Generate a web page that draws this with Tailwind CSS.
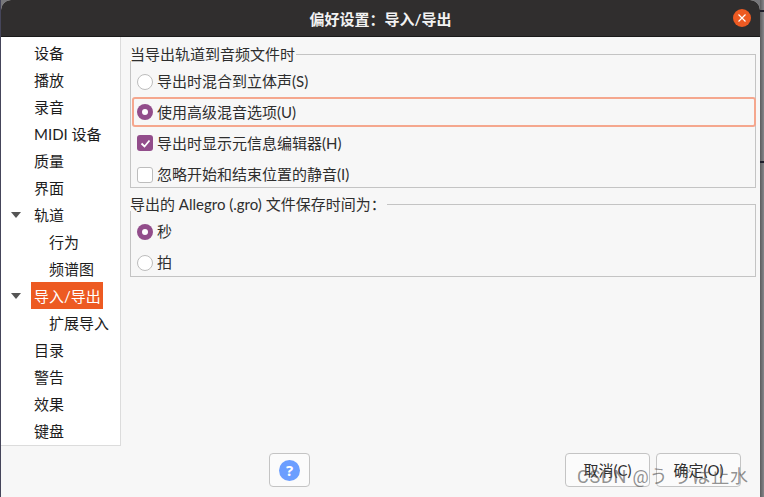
<!DOCTYPE html>
<html><head><meta charset="utf-8"><script src="https://cdn.jsdelivr.net/npm/@tailwindcss/browser@4"></script></head>
<body class="m-0 w-[764px] h-[497px] overflow-hidden bg-[#77777a]">
<div class="relative flex w-[764px] h-[497px] font-['Lato','Noto_Sans_CJK_SC',sans-serif] text-[15px] text-[#2e2e2e] leading-none">
  <div class="w-px shrink-0 bg-[#45455a]"></div>
  <div class="flex flex-col w-[759px] h-full rounded-t-[10px] overflow-hidden bg-[#f7f7f7]">
    <div class="h-[37px] shrink-0 relative flex items-center justify-center bg-[#302e2e] border-b border-[#1a1a1a] text-[#f2f2f2] font-bold pt-[2px]">偏好设置：导入/导出
      <div class="absolute right-[9px] top-[9px] w-[18px] h-[18px] rounded-full bg-[#ed5a22] flex items-center justify-center">
        <svg width="10" height="10" viewBox="0 0 10 10"><path d="M1.5 1.5l7 7M8.5 1.5l-7 7" stroke="#fff" stroke-width="1.2" fill="none"/></svg>
      </div>
    </div>
    <div class="flex flex-1 min-h-0">
      <div class="w-[120px] shrink-0 flex flex-col">
        <div class="h-[410px] bg-white border-r border-b border-[#dcdcdc] pt-[2px] text-[#1c1c1c]">
          <div class="h-[27px] flex items-center pl-[33px] pt-[1px]">设备</div>
          <div class="h-[27px] flex items-center pl-[33px] pt-[1px]">播放</div>
          <div class="h-[27px] flex items-center pl-[33px] pt-[1px]">录音</div>
          <div class="h-[27px] flex items-center pl-[33px] pt-[1px]">MIDI 设备</div>
          <div class="h-[27px] flex items-center pl-[33px] pt-[1px]">质量</div>
          <div class="h-[27px] flex items-center pl-[33px] pt-[1px]">界面</div>
          <div class="h-[27px] flex items-center pl-[10px] pt-[1px]"><span class="w-[23px] shrink-0"><span class="block w-0 h-0 mb-[1px] border-x-[5px] border-x-transparent border-t-[6px] border-t-[#555]"></span></span>轨道</div>
          <div class="h-[27px] flex items-center pl-[48px] pt-[1px]">行为</div>
          <div class="h-[27px] flex items-center pl-[48px] pt-[1px]">频谱图</div>
          <div class="h-[27px] flex items-center pl-[10px]"><span class="w-[20px] shrink-0"><span class="block w-0 h-0 border-x-[5px] border-x-transparent border-t-[6px] border-t-[#555]"></span></span><span class="h-[27px] w-[72px] flex items-center pl-[3px] pt-[1px] bg-[#ed5a22] text-white">导入/导出</span></div>
          <div class="h-[27px] flex items-center pl-[48px] pt-[1px]">扩展导入</div>
          <div class="h-[27px] flex items-center pl-[33px] pt-[1px]">目录</div>
          <div class="h-[27px] flex items-center pl-[33px] pt-[1px]">警告</div>
          <div class="h-[27px] flex items-center pl-[33px] pt-[1px]">效果</div>
          <div class="h-[27px] flex items-center pl-[33px] pt-[1px]">键盘</div>
        </div>
      </div>
      <div class="flex-1 min-w-0 pl-[9px] pr-[4px] pt-[10px]">
        <fieldset class="border border-[#c4c4c4] m-0 p-0 h-[141px]">
          <legend class="p-0 pr-[1px] -ml-[1px] leading-[14px]">当导出轨道到音频文件时</legend>
          <div class="flex items-center h-[31px] pl-[6px] mt-[5px]">
            <span class="w-[16px] h-[16px] rounded-full border border-[#bdbdbd] bg-white mr-[4px]"></span>导出时混合到立体声(S)
          </div>
          <div class="flex items-center h-[30px] ml-[1px] mr-[-1px] pl-[3px] rounded-[3px] border-2 border-[#f5a78e]">
            <span class="w-[16px] h-[16px] rounded-full bg-[#924d8b] mr-[4px] flex items-center justify-center"><span class="w-[6px] h-[6px] rounded-full bg-white"></span></span>使用高级混音选项(U)
          </div>
          <div class="flex items-center h-[32px] pl-[6px]">
            <span class="w-[16px] h-[16px] rounded-[3px] bg-[#924d8b] mr-[4px] flex items-center justify-center"><svg width="13" height="13" viewBox="0 0 13 13"><path d="M2.5 6.5l3 3 5-6" stroke="#fff" stroke-width="1.8" fill="none"/></svg></span>导出时显示元信息编辑器(H)
          </div>
          <div class="flex items-center h-[31px] pl-[6px]">
            <span class="w-[16px] h-[16px] rounded-[3px] border border-[#bdbdbd] bg-white mr-[4px]"></span>忽略开始和结束位置的静音(I)
          </div>
        </fieldset>
        <fieldset class="border border-[#c4c4c4] m-0 mt-[9px] p-0 h-[80px]">
          <legend class="p-0 pr-[1px] -ml-[1px] leading-[14px]">导出的 Allegro (.gro) 文件保存时间为：</legend>
          <div class="flex items-center h-[31px] pl-[6px] mt-[5px]">
            <span class="w-[16px] h-[16px] rounded-full bg-[#924d8b] mr-[4px] flex items-center justify-center"><span class="w-[6px] h-[6px] rounded-full bg-white"></span></span>秒
          </div>
          <div class="flex items-center h-[31px] pl-[6px]">
            <span class="w-[16px] h-[16px] rounded-full border border-[#bdbdbd] bg-white mr-[4px]"></span>拍
          </div>
        </fieldset>
      </div>
    </div>
    <div class="h-[51px] shrink-0 flex items-start pt-[7px] pr-[19px] pl-[268px]">
      <button class="w-[41px] h-[34px] rounded-[4px] border border-[#c4c4c4] bg-[#fbfbfb] flex items-center justify-center">
        <svg width="21" height="21" viewBox="0 0 21 21"><circle cx="10.5" cy="10.5" r="10.5" fill="#6b9eff"/><text x="10.5" y="16" text-anchor="middle" font-size="15" font-weight="700" fill="#fff" font-family="Noto Sans">?</text></svg>
      </button>
      <div class="flex-1"></div>
      <button class="w-[85px] h-[34px] rounded-[4px] border border-[#c4c4c4] bg-[#fbfbfb] mr-[6px]">取消(C)</button>
      <button class="w-[85px] h-[34px] rounded-[4px] border border-[#c4c4c4] bg-[#fbfbfb]">确定(O)</button>
    </div>
  </div>
  <div class="flex-1 flex flex-col bg-gradient-to-r from-[#5c5c5e] to-[#86868a]">
    <div class="h-[2px] mt-[10px] bg-[#1d1d2a]"></div>
    <div class="h-[2px] mt-[149px] bg-[#1d1d2a]"></div>
  </div>
  <div class="absolute left-[577px] top-[468px] text-[18px] text-[#555]/65 tracking-[0.8px] whitespace-nowrap font-['Roboto','Noto_Sans_CJK_SC',sans-serif]">CSDN @う ゔは止水</div>
</div>
</body></html>
